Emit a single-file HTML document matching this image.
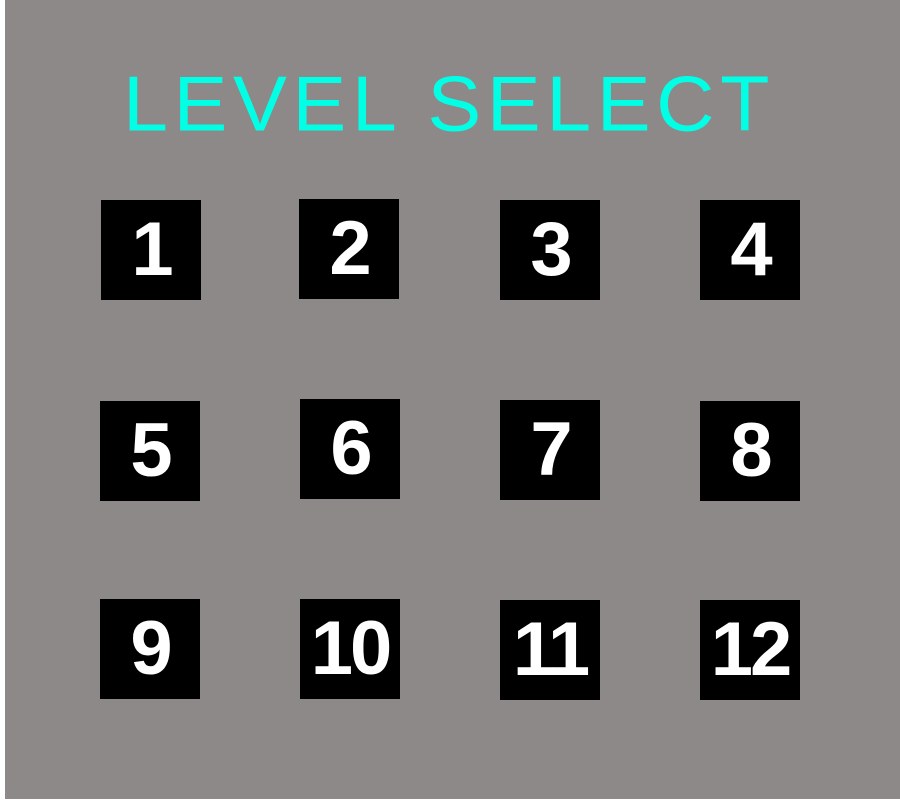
<!DOCTYPE html>
<html><head><style>
html,body{margin:0;padding:0;background:#fff;}
.bg{position:absolute;left:5px;top:0;width:895px;height:799px;background:#8d8988;}
.t{position:absolute;left:123px;top:56px;color:#00ffe5;font:400 80px "Liberation Sans",sans-serif;letter-spacing:5.5px;line-height:100px;white-space:nowrap;transform-origin:0 0;transform:scale(1.01,0.97)}
.b{position:absolute;width:100px;height:100px;background:#000;color:#fff;font:700 76px "Liberation Sans",sans-serif;text-align:center;line-height:100px;letter-spacing:-3px}
</style></head><body>
<div class="bg"></div>
<div class="t">LEVEL SELECT</div>
<div class="b" style="left:101px;top:200px">1</div>
<div class="b" style="left:299px;top:199px">2</div>
<div class="b" style="left:500px;top:200px">3</div>
<div class="b" style="left:700px;top:200px">4</div>
<div class="b" style="left:100px;top:401px">5</div>
<div class="b" style="left:300px;top:399px">6</div>
<div class="b" style="left:500px;top:400px">7</div>
<div class="b" style="left:700px;top:401px">8</div>
<div class="b" style="left:100px;top:599px">9</div>
<div class="b" style="left:300px;top:599px">10</div>
<div class="b" style="left:500px;top:600px">11</div>
<div class="b" style="left:700px;top:600px">12</div>
</body></html>
